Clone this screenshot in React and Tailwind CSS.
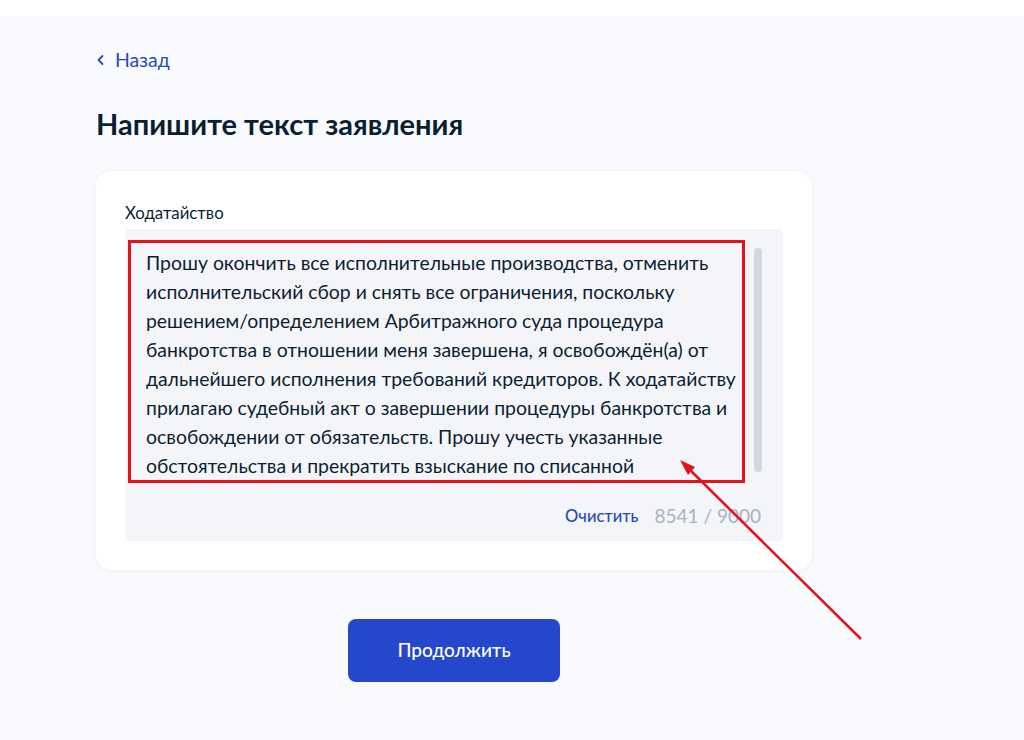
import React from "react";

const lines = [
  "Прошу окончить все исполнительные производства, отменить",
  "исполнительский сбор и снять все ограничения, поскольку",
  "решением/определением Арбитражного суда процедура",
  "банкротства в отношении меня завершена, я освобождён(а) от",
  "дальнейшего исполнения требований кредиторов. К ходатайству",
  "прилагаю судебный акт о завершении процедуры банкротства и",
  "освобождении от обязательств. Прошу учесть указанные",
  "обстоятельства и прекратить взыскание по списанной",
];

export default function App() {
  return (
    <div className="relative min-h-[740px] bg-[#f9fafd] font-['Lato',sans-serif] text-[#0b1f33]">
      <div className="h-4 bg-white" />

      <main className="flex flex-col pl-24 pt-[33px] w-[812px]">
        <a className="flex items-center gap-[10px] text-[19.5px] leading-[22px] text-[#2a4bb5]">
          <svg width="9" height="12" viewBox="0 0 9 12" fill="none">
            <path d="M6.5 2L2.5 6l4 4" stroke="#2a4bb5" strokeWidth="1.8" strokeLinecap="round" strokeLinejoin="round" />
          </svg>
          Назад
        </a>

        <h1 className="mt-[36px] text-[29px] leading-[34px] font-bold">
          Напишите текст заявления
        </h1>

        <div className="mt-[30px] rounded-[16px] bg-white px-[29px] pt-[32px] pb-[29px] shadow-[0_1px_6px_rgba(30,50,90,0.05)]">
          <div className="text-[16.8px] leading-[20px] text-[#0b1f33]">Ходатайство</div>

          <div className="relative mt-[6px] rounded-[4px] bg-[#f4f5f9]">
            <div className="flex">
              <div className="flex-1 pl-[21px] pt-[19px]">
                <div className="h-[232px] overflow-hidden text-[19.4px] leading-[29px] text-[#0b1f33]">
                  {lines.map((l) => (
                    <div key={l} className="whitespace-nowrap">{l}</div>
                  ))}
                </div>
              </div>
              <div className="mr-[21px] mt-[19px] h-[224px] w-2 rounded-full bg-[#d3d6de]" />
            </div>

            <div className="flex items-center justify-end gap-4 pr-[22px] pt-[24px] pb-[13px]">
              <span className="text-[16.5px] leading-[24px] font-medium text-[#2a4bb5]">Очистить</span>
              <span className="text-[19px] leading-[24px] text-[#a9b1c5]">8541 / 9000</span>
            </div>

            <div className="absolute left-[3px] top-[11px] h-[243px] w-[617px] border-[3px] border-[#e4131b]" />
          </div>
        </div>

        <div className="mt-[49px] flex justify-center">
          <button className="h-[63px] w-[212px] rounded-[8px] bg-[#2447cc] text-[19px] font-medium text-white">
            Продолжить
          </button>
        </div>
      </main>

      <svg className="pointer-events-none absolute left-0 top-0" width="1024" height="740">
        <line x1="861" y1="639" x2="688" y2="468" stroke="#e4131b" strokeWidth="2.5" />
        <polygon points="680,460 695,467 688,475" fill="#e4131b" />
      </svg>
    </div>
  );
}
